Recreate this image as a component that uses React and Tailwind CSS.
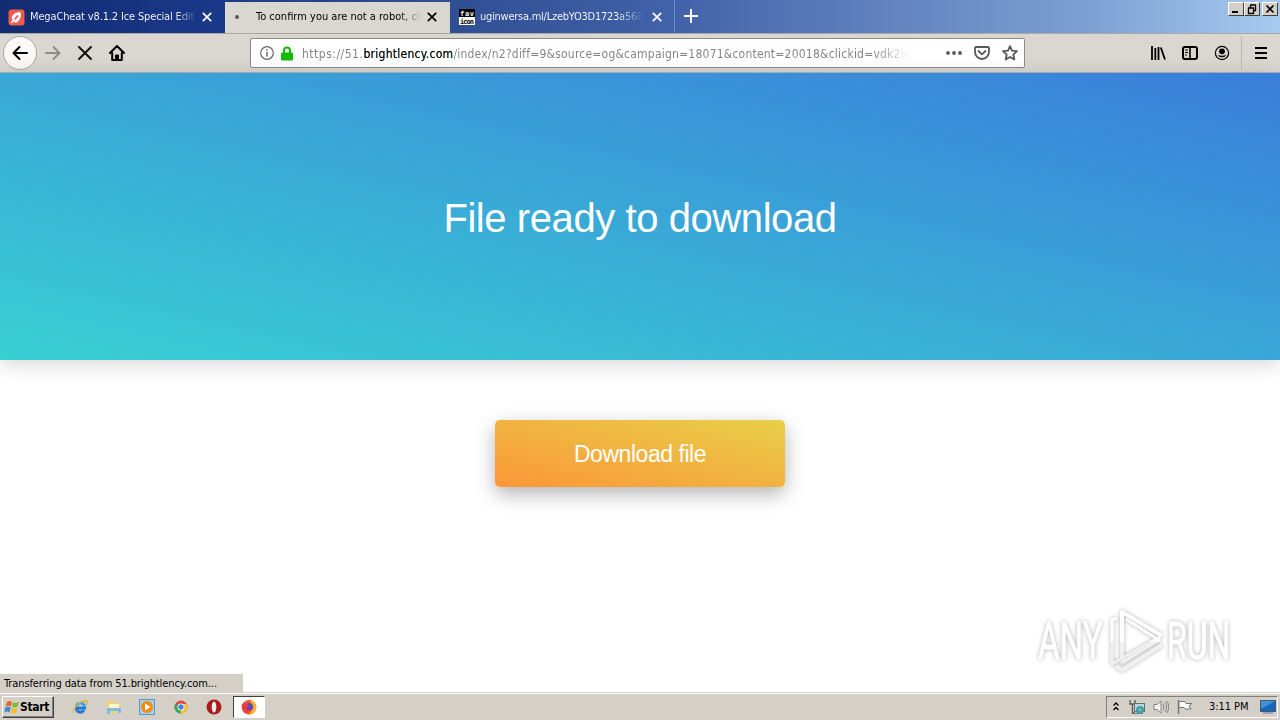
const UI = "font-['DejaVu_Sans_Condensed','DejaVu_Sans',sans-serif] [font-stretch:condensed]";

const CloseIcon = ({ className = 'text-white' }) => (
    <svg className={`size-[10px] shrink-0 ${className}`} viewBox="0 0 10 10" fill="none" stroke="currentColor" strokeWidth="1.7">
        <path d="M.8.8l8.4 8.4M9.2.8L.8 9.2" />
    </svg>
);

const WindowButtons = () => (
    <div className="ml-auto mr-[2px] mt-[2px] flex h-[14px]">
        {['min', 'restore', 'close'].map(kind => (
            <div
                key={kind}
                className={`h-[14px] w-4 border border-t-white border-l-white border-r-[#404040] border-b-[#404040] bg-[#d4d0c8] ${kind === 'close' ? 'ml-[2px]' : ''}`}
            >
                <svg width="14" height="12" viewBox="0 0 14 12" fill="none" stroke="#000">
                    {kind === 'min' && <path d="M3 9h6" strokeWidth="2" />}
                    {kind === 'restore' && <path d="M5 2h6M5.500 2v2.500M10.500 2v5.500H8.500M3 5h6M3.500 5v5.500h5V5" strokeWidth="1.300" />}
                    {kind === 'close' && <path d="M3.500 2.500l7 7M10.500 2.500l-7 7" strokeWidth="1.700" />}
                </svg>
            </div>
        ))}
    </div>
);

const TabStrip = () => (
    <div className={`flex h-[33px] bg-[linear-gradient(90deg,#102a70_0%,#1d3b85_17%,#31518f_35%,#4061a8_52%,#6384c0_70%,#7ca0d2_85%,#a6caf0_100%)] text-[11px] ${UI}`}>
        <div className="flex h-8 w-[225px] items-center bg-linear-to-r from-[#122b72] to-[#1b398a] pt-[2px] pl-2 pr-[13px]">
            <svg className="size-[17px] shrink-0" viewBox="0 0 17 17">
                <rect x=".500" y=".500" width="16" height="16" rx="3" fill="#ef5a50" />
                <path d="M4 10c-1-3 2-6 7-7l2 1c0 5-2 9-6 10l-1-2z" fill="#fff" />
                <path d="M6 10l3-4 2 1-4 4z" fill="#ef5a50" />
                <path d="M3 14l3-3" stroke="#fff" strokeWidth="1.500" />
            </svg>
            <span className="ml-[5px] w-[168px] whitespace-nowrap bg-linear-to-r from-white from-86% to-transparent bg-clip-text pt-px tracking-[-0.15px] text-transparent">
                MegaCheat v8.1.2 Ice Special Edit
            </span>
            <span className="flex-1" />
            <CloseIcon />
        </div>
        <div className="mt-[2px] flex w-[225px] items-center bg-[#dad7d0] pb-[2px] pl-[10px] pr-[13px]">
            <span className="size-1 rounded-full bg-[#555]" />
            <span className="ml-[17px] w-[166px] overflow-hidden whitespace-nowrap bg-linear-to-r from-black from-86% to-transparent bg-clip-text pt-[2px] text-transparent">
                To confirm you are not a robot, cli
            </span>
            <span className="flex-1" />
            <CloseIcon className="text-black" />
        </div>
        <div className="flex h-8 w-[225px] items-center border-r border-[#6f8dc5] bg-linear-to-r from-[#2f4e93] to-[#4262a9] pt-[2px] pl-[9px] pr-3">
            <svg className="size-4 shrink-0" viewBox="0 0 16 16">
                <rect width="16" height="16" fill="#fff" />
                <rect width="16" height="8" />
                <text x="1" y="6.500" fontFamily="DejaVu Sans Mono" fontSize="7" fontWeight="bold" fill="#fff" textLength="14">fav</text>
                <text x="1" y="15" fontFamily="DejaVu Sans Mono" fontSize="7" fontWeight="bold" textLength="14">icon</text>
            </svg>
            <span className="ml-[5px] w-[165px] whitespace-nowrap bg-linear-to-r from-white from-82% to-transparent bg-clip-text pt-px tracking-[-0.25px] text-transparent">
                uginwersa.ml/LzebYO3D1723a560
            </span>
            <span className="flex-1" />
            <CloseIcon />
        </div>
        <svg className="ml-[9px] mt-[9px] size-[14px]" viewBox="0 0 14 14" stroke="#fff" strokeWidth="2">
            <path d="M7 0v14M0 7h14" />
        </svg>
        <WindowButtons />
    </div>
);

const UrlBar = () => (
    <div className="flex h-[30px] w-[775px] items-center rounded-[2px] border border-[#8a8a8a] bg-white pl-[9px] pr-[6px]">
        <svg className="size-[14px] shrink-0" viewBox="0 0 14 14" fill="none" stroke="#666">
            <circle cx="7" cy="7" r="6.300" strokeWidth="1.200" />
            <path d="M7 6v4.500M7 3.300v1.500" strokeWidth="1.500" />
        </svg>
        <svg className="ml-[7px] h-[15px] w-3 shrink-0" viewBox="0 0 12 15">
            <path d="M3 7V4.500a3 3 0 016 0V7" fill="none" stroke="#12bc00" strokeWidth="2" />
            <rect y="6.500" width="12" height="8" rx="1.300" fill="#12bc00" />
        </svg>
        <span className={`ml-[9px] w-[608px] overflow-hidden whitespace-nowrap text-[12px] tracking-[0.22px] ${UI} bg-linear-to-r from-[#808080] from-94% to-transparent bg-clip-text pt-px text-transparent`}>
            <span className="tracking-[0.5px]">https://51.</span><span className="tracking-[0.28px] text-black">brightlency.com</span>/index/n2?diff=9&amp;source=og&amp;campaign=18071&amp;content=20018&amp;clickid=vdk2ie
        </span>
        <span className="flex-1" />
        <svg className="h-4 w-4 shrink-0" viewBox="0 0 16 16" fill="#585858">
            <circle cx="2" cy="8" r="1.900" /><circle cx="8" cy="8" r="1.900" /><circle cx="14" cy="8" r="1.900" />
        </svg>
        <svg className="ml-3 size-4 shrink-0" viewBox="0 0 16 16" fill="none" stroke="#585858" strokeWidth="1.800" strokeLinecap="round" strokeLinejoin="round">
            <path d="M2 2h12q1 0 1 1v4a7 7 0 01-14 0V3q0-1 1-1zM4.500 6L8 9.300 11.500 6" />
        </svg>
        <svg className="ml-3 size-4 shrink-0" viewBox="0 0 16 16" fill="none" stroke="#585858" strokeWidth="1.800" strokeLinejoin="round">
            <path d="M8 1.200l2 4.500 5 .500-3.700 3.400 1 4.900L8 12l-4.300 2.500 1-4.900L1 6.200l5-.500z" />
        </svg>
    </div>
);

const Toolbar = () => (
    <div className="flex h-10 items-center border-t border-b border-t-[#aaa8a2] border-b-[#a9b6bd] bg-[#dad7d0]">
        <div className="ml-[3px] flex size-[34px] shrink-0 items-center justify-center rounded-full border border-[#aaa] bg-[#faf9f7]">
            <svg className="size-4" viewBox="0 0 16 16" fill="none" stroke="#000" strokeWidth="2" strokeLinecap="round" strokeLinejoin="round">
                <path d="M15 8H1.500M7.500 2l-6 6 6 6" />
            </svg>
        </div>
        <svg className="ml-2 size-4" viewBox="0 0 16 16" fill="none" stroke="#8d8b87" strokeWidth="1.800" strokeLinecap="round" strokeLinejoin="round">
            <path d="M1 8h13.500M8.500 2l6 6-6 6" />
        </svg>
        <svg className="ml-4 size-4" viewBox="0 0 16 16" stroke="#111" strokeWidth="2" strokeLinecap="round">
            <path d="M2 2l12 12M14 2L2 14" />
        </svg>
        <svg className="ml-4 size-4" viewBox="0 0 16 16" fill="none" stroke="#000" strokeWidth="2" strokeLinecap="round" strokeLinejoin="round">
            <path d="M1 8l7-7 7 7M3.200 8v7h9.600V8" />
            <path d="M6.500 14v-4h3v4z" fill="#000" strokeWidth="1" />
        </svg>
        <div className="ml-[125px]"><UrlBar /></div>
        <svg className="ml-[125px] size-4" viewBox="0 0 16 16" stroke="#000" strokeWidth="1.800">
            <path d="M2 1v14M5.300 3v12M8.500 2v13M10.800 2.500l4.200 12" />
        </svg>
        <svg className="ml-4 size-4" viewBox="0 0 16 16" fill="none" stroke="#000">
            <rect x="1" y="2" width="14" height="12" rx="2" strokeWidth="2" />
            <path d="M8 2v12" strokeWidth="1.600" />
            <path d="M3 5h3M3 7.500h3M3 10h2" strokeWidth="1" />
        </svg>
        <svg className="ml-4 size-4" viewBox="0 0 16 16">
            <circle cx="8" cy="8" r="6.600" fill="none" stroke="#000" strokeWidth="1.200" />
            <circle cx="8" cy="6.300" r="2.900" />
            <path d="M3.500 9.500q4.500 2.400 9 0a5 5 0 01-9 0z" />
        </svg>
        <span className="ml-[11px] h-[34px] w-px bg-[#bdbab4]" />
        <svg className="ml-[11px] size-4" viewBox="0 0 16 16" stroke="#000" strokeWidth="2">
            <path d="M2 3h12M2 8h12M2 13h12" />
        </svg>
    </div>
);

const Watermark = () => (
    <svg className="absolute left-[1030px] top-[600px] h-20 w-[230px] drop-shadow-[0_0_2px_rgba(0,0,0,0.3)]" viewBox="0 0 230 80">
        <defs>
            <linearGradient id="wm" x1="0" y1="0" x2="0" y2="80" gradientUnits="userSpaceOnUse">
                <stop offset="52%" stopColor="#fff" />
                <stop offset="52%" stopColor="#f0f0f0" />
            </linearGradient>
        </defs>
        <g fill="url(#wm)" stroke="url(#wm)" strokeWidth=".800" fontFamily="Roboto, sans-serif" fontSize="51">
            <text transform="translate(8 59) scale(.65 1)">ANY</text>
            <text transform="translate(137 59) scale(.63 1)">RUN</text>
        </g>
        <g fill="none" stroke="url(#wm)" strokeWidth="4" strokeLinejoin="round">
            <path d="M92 60V12l40 24" />
            <path d="M96 19l33 21-38 23" strokeWidth="3" />
            <path d="M87 18l-5 2v44l48-27" strokeWidth="3" />
            <path d="M86 66l6 4 40-25" />
        </g>
    </svg>
);

const QUICK_LAUNCH = [
    <>
        <path d="M14 9H4.500a4 4 0 007.500 2" fill="none" stroke="#2878cd" strokeWidth="3" />
        <path d="M4.500 8a4 4 0 018 0" fill="none" stroke="#3f9de5" strokeWidth="3" />
        <path d="M2 14C-1 11 9 0 15 2q1 1-1 4" fill="none" stroke="#e4b62c" strokeWidth="1.400" />
    </>,
    <>
        <path d="M1 3l1-1h5l1 2h6v10H1z" fill="#f0d477" />
        <path d="M3 5h10v5H3z" fill="#fff5c8" />
        <path d="M1 9h14v5h-3v-2H4v3H1z" fill="#7dbbe5" />
    </>,
    <>
        <rect x=".500" y=".500" width="15" height="15" fill="#a4d0f1" stroke="#5996c9" />
        <circle cx="8" cy="8" r="6" fill="#f38b13" />
        <path d="M6 4.500L11.500 8 6 11.500z" fill="#fff" />
    </>,
    <>
        <circle cx="8" cy="8" r="6.500" fill="#e4463a" />
        <path d="M8 8L2.400 4.700A6.500 6.500 0 007.500 14.500l3.500-5.500z" fill="#36a853" />
        <path d="M8 8l-.500 6.500A6.500 6.500 0 0013.800 5H8z" fill="#f8c72b" />
        <circle cx="8" cy="8" r="3.500" fill="#fff" />
        <circle cx="8" cy="8" r="2.700" fill="#4383ec" />
    </>,
    <>
        <circle cx="8" cy="8" r="7.500" fill="#a81c1c" />
        <ellipse cx="8" cy="8" rx="2.300" ry="5.500" fill="#eee" />
    </>,
];

const Taskbar = () => (
    <div className={`flex h-7 items-center border-t border-[#d4d0c8] bg-[#d4d0c8] shadow-[inset_0_1px_0_#fff] ${UI}`}>
        <div className="ml-[2px] mt-px flex h-[22px] w-[52px] items-center border border-t-white border-l-white border-r-[#404040] border-b-[#404040] pl-px shadow-[inset_-1px_-1px_0_#808080]">
            <svg className="size-4 shrink-0" viewBox="0 0 16 16">
                <path d="M3 3q3-2 5 0L7 7.500q-3-1.500-5.500 0z" fill="#e8642d" />
                <path d="M9 3.300q3 1.500 6-.500L13.500 7.500q-3 2-5.500 0z" fill="#7ab937" />
                <path d="M1.300 8.500q3-1.500 5.500 0l-1.300 5q-2.500-2-5 0z" fill="#3c8ad5" />
                <path d="M7.800 8.800q3 2 5.500 0l-1.300 5q-3 1.500-5.500 0z" fill="#f5bd22" />
            </svg>
            <span className="text-[12px] font-bold tracking-[-0.35px]">Start</span>
        </div>
        <div className="ml-[18px] mt-px flex gap-[17.600px]">
            {QUICK_LAUNCH.map((icon, i) => (
                <svg key={i} className="size-4" viewBox="0 0 16 16">{icon}</svg>
            ))}
        </div>
        <div className="ml-[11px] mt-px flex h-[22px] w-8 items-center justify-center border border-t-[#404040] border-l-[#404040] border-r-white border-b-white bg-white">
            <svg className="size-4" viewBox="0 0 16 16">
                <circle cx="8" cy="8.300" r="7.300" fill="#f4572d" />
                <path d="M9 0q6 3 6.300 8a7 7 0 01-7 7.500l3-5z" fill="#fbb32c" />
                <circle cx="8.300" cy="7.700" r="3.800" fill="#5b46b5" />
                <path d="M1 5q3-2 6 1l1 2-3 1q1 3 5 2-2 4-6 2-4-3-3-8z" fill="#ee3a3e" />
            </svg>
        </div>
        <div className="ml-auto mr-[2px] mt-px flex h-[22px] w-[172px] items-center border border-t-[#808080] border-l-[#808080] border-r-white border-b-white pl-[6px]">
            <svg className="mb-[2px] h-[9px] w-[6px] shrink-0" viewBox="0 0 6 9" fill="none" stroke="#000" strokeWidth="1.300">
                <path d="M.500 3.500L3 1l2.500 2.500M.500 8L3 5.500 5.500 8" />
            </svg>
            <svg className="ml-[10px] size-4 shrink-0" viewBox="0 0 16 16">
                <path d="M1 1v4h5V1M3.500 5v9H6" fill="none" stroke="#555" strokeWidth="1.300" />
                <rect x="5.500" y="4.500" width="10" height="8" fill="#b8d9dc" stroke="#5d7278" />
                <path d="M6 14.500h8" stroke="#777" />
                <circle cx="11" cy="11" r="4" fill="#3b9db4" />
                <path d="M9 10l2-1 2 2-2 2z" fill="#8cc76f" />
            </svg>
            <svg className="ml-2 size-4 shrink-0" viewBox="0 0 16 16" fill="none" stroke="#858585">
                <path d="M1 5.500h3L8 2v12l-4-3.500H1z" fill="#f5f5f5" />
                <path d="M10 5q2 3 0 6M12 3q3.500 5 0 10M14 2q3.500 6 0 12" />
            </svg>
            <svg className="ml-2 size-4 shrink-0" viewBox="0 0 16 16" stroke="#777">
                <path d="M1.500 1v14" strokeWidth="1.500" />
                <path d="M2 2.500h6l1 2h6L12 7l2 3H8L7 8.500H2z" fill="#fff" />
            </svg>
            <span className="ml-4 whitespace-nowrap pt-px text-[11px] tracking-[-0.05px]">3:11 PM</span>
            <svg className="ml-auto mr-px h-[14px] w-4 shrink-0" viewBox="0 0 16 14">
                <rect x=".500" y=".500" width="15" height="11" fill="#1765bd" stroke="#4a5969" />
                <path d="M1 1h14L3 8H1z" fill="#4292d8" />
                <path d="M3 13h10" stroke="#6b7885" />
            </svg>
        </div>
    </div>
);

export default function App() {
    return (
        <div className="relative flex h-[720px] w-[1280px] flex-col overflow-hidden bg-white text-black">
            <TabStrip />
            <Toolbar />
            <main className="flex flex-1 flex-col items-center font-['Liberation_Sans',Arial,sans-serif] text-white">
                <header className="flex h-[287px] w-full items-center justify-center bg-linear-to-tr/srgb from-[#38d0d3] to-[#3a7edb] pt-[2px] shadow-[0_4px_20px_rgba(0,0,0,0.17)]">
                    <h1 className="text-[40px] leading-none tracking-[-0.42px]">File ready to download</h1>
                </header>
                <button className="mt-[60px] h-[67px] w-[290px] rounded-[5px] bg-linear-to-tr/srgb from-[#fb9638] to-[#e8d048] pt-[2px] text-[23px] tracking-[-0.45px] shadow-[0_7px_20px_rgba(0,0,0,0.3)]">
                    Download file
                </button>
                <div className={`mt-auto flex h-[18px] w-[243px] items-center self-start bg-[#d4d0c8] pl-1 pt-[3px] text-[11px] tracking-[-0.1px] text-black ${UI}`}>
                    Transferring data from 51.brightlency.com...
                </div>
            </main>
            <Taskbar />
            <Watermark />
        </div>
    );
}
